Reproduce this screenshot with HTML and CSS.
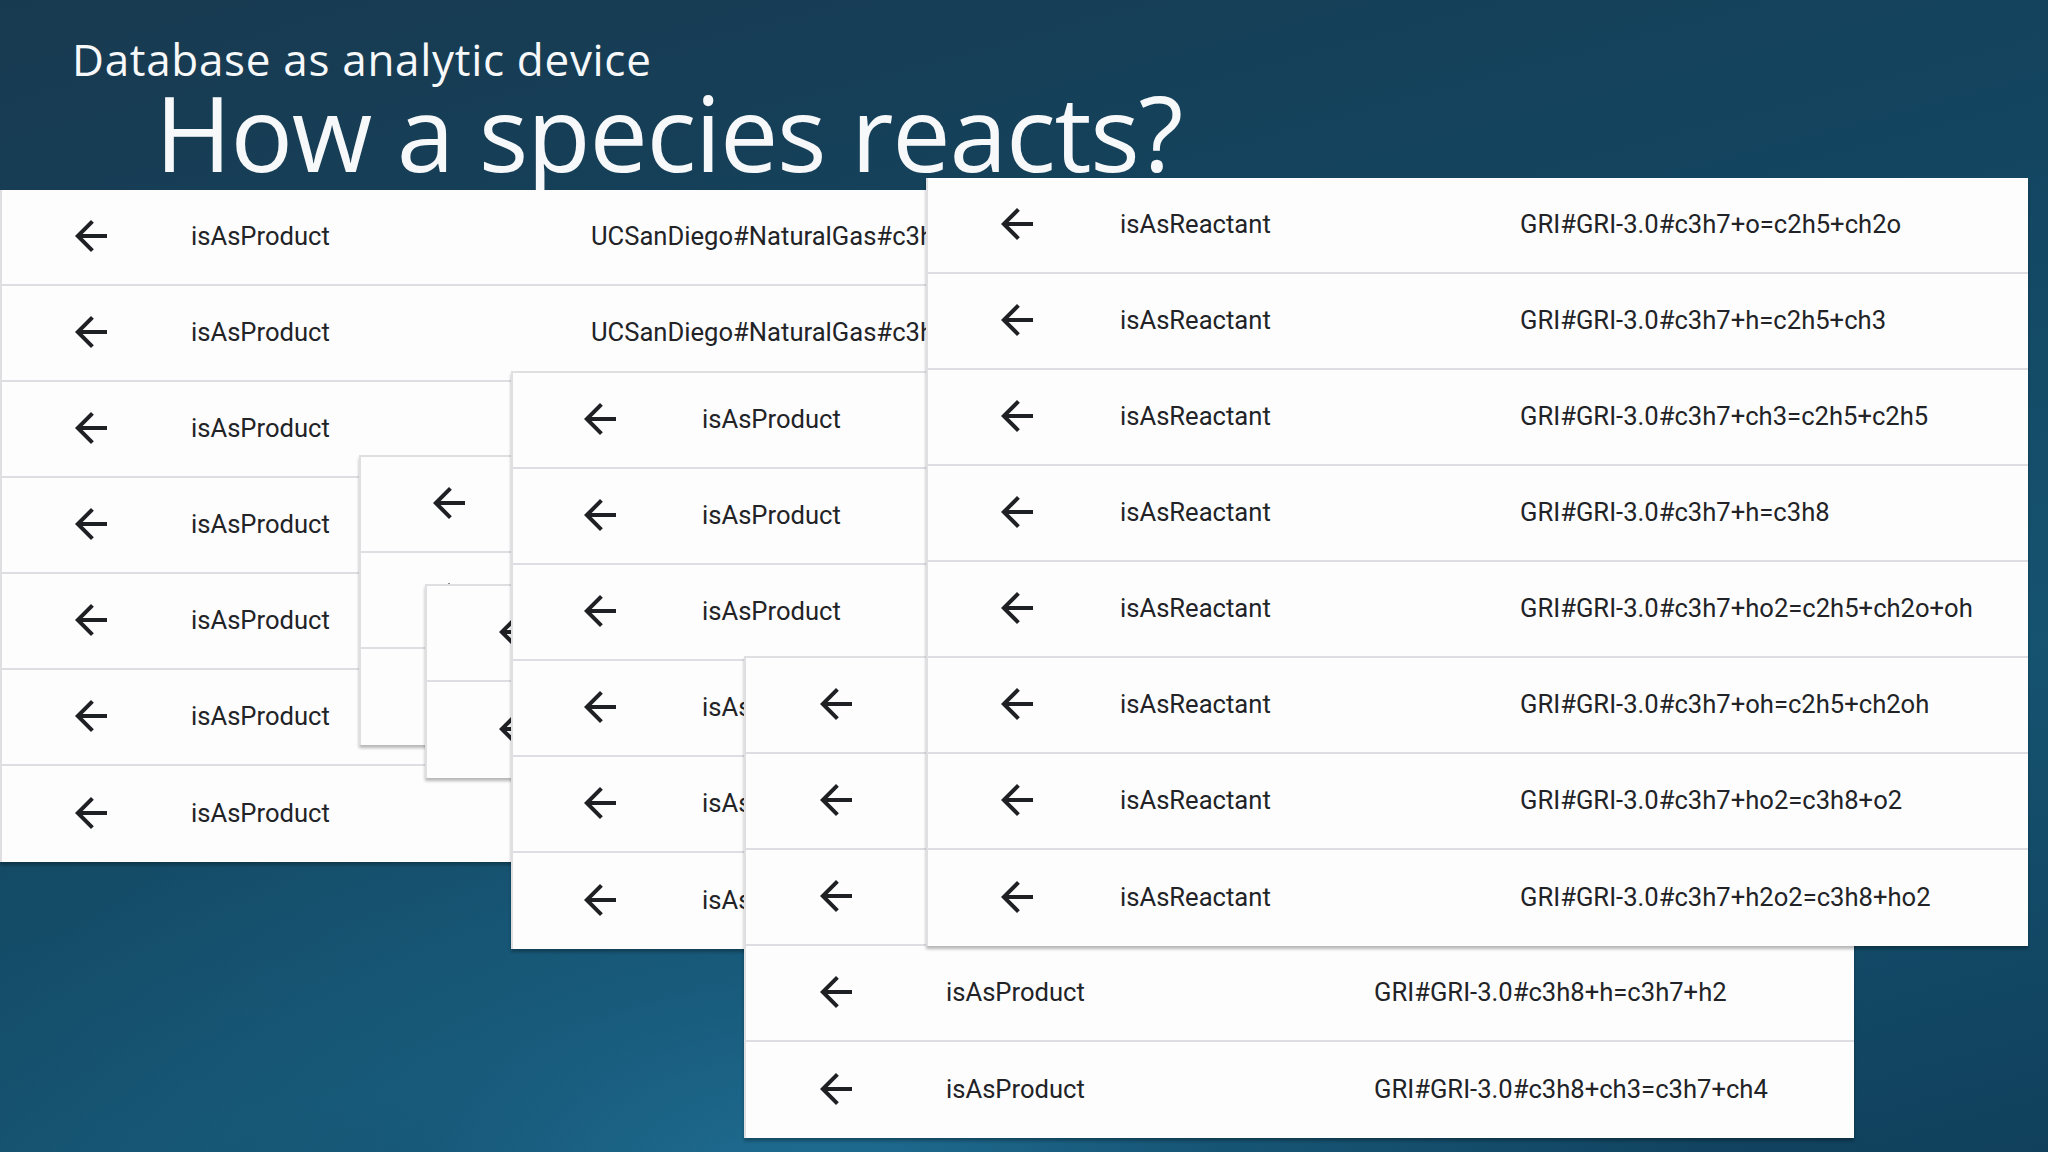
FILE: index.html
```html
<!DOCTYPE html>
<html lang="en">
<head>
<meta charset="utf-8">
<title>How a species reacts?</title>
<link rel="stylesheet" href="styles.css">
</head>
<body>
<div class="slide">
  <header class="titles">
    <div class="kicker">Database as analytic device</div>
    <h1 class="headline">How a species reacts?</h1>
  </header>

  <div class="desk">
    <section class="panel panel-a">
      <div class="row"><span class="ico"><svg viewBox="0 0 24 24"><path d="M20 11H7.83l5.59-5.59L12 4l-8 8 8 8 1.41-1.41L7.83 13H20v-2z"/></svg></span><span class="rel">isAsProduct</span><span class="obj">UCSanDiego#NaturalGas#c3h7</span></div>
      <div class="row"><span class="ico"><svg viewBox="0 0 24 24"><path d="M20 11H7.83l5.59-5.59L12 4l-8 8 8 8 1.41-1.41L7.83 13H20v-2z"/></svg></span><span class="rel">isAsProduct</span><span class="obj">UCSanDiego#NaturalGas#c3h7</span></div>
      <div class="row"><span class="ico"><svg viewBox="0 0 24 24"><path d="M20 11H7.83l5.59-5.59L12 4l-8 8 8 8 1.41-1.41L7.83 13H20v-2z"/></svg></span><span class="rel">isAsProduct</span><span class="obj"></span></div>
      <div class="row"><span class="ico"><svg viewBox="0 0 24 24"><path d="M20 11H7.83l5.59-5.59L12 4l-8 8 8 8 1.41-1.41L7.83 13H20v-2z"/></svg></span><span class="rel">isAsProduct</span><span class="obj"></span></div>
      <div class="row"><span class="ico"><svg viewBox="0 0 24 24"><path d="M20 11H7.83l5.59-5.59L12 4l-8 8 8 8 1.41-1.41L7.83 13H20v-2z"/></svg></span><span class="rel">isAsProduct</span><span class="obj"></span></div>
      <div class="row"><span class="ico"><svg viewBox="0 0 24 24"><path d="M20 11H7.83l5.59-5.59L12 4l-8 8 8 8 1.41-1.41L7.83 13H20v-2z"/></svg></span><span class="rel">isAsProduct</span><span class="obj"></span></div>
      <div class="row"><span class="ico"><svg viewBox="0 0 24 24"><path d="M20 11H7.83l5.59-5.59L12 4l-8 8 8 8 1.41-1.41L7.83 13H20v-2z"/></svg></span><span class="rel">isAsProduct</span><span class="obj"></span></div>
    </section>

    <section class="panel panel-d">
      <div class="row"><span class="ico"><svg viewBox="0 0 24 24"><path d="M20 11H7.83l5.59-5.59L12 4l-8 8 8 8 1.41-1.41L7.83 13H20v-2z"/></svg></span><span class="rel"></span><span class="obj"></span></div>
      <div class="row"><span class="ico"><svg viewBox="0 0 24 24"><path d="M20 11H7.83l5.59-5.59L12 4l-8 8 8 8 1.41-1.41L7.83 13H20v-2z"/></svg></span><span class="rel"></span><span class="obj"></span></div>
      <div class="row"><span class="ico"><svg viewBox="0 0 24 24"><path d="M20 11H7.83l5.59-5.59L12 4l-8 8 8 8 1.41-1.41L7.83 13H20v-2z"/></svg></span><span class="rel"></span><span class="obj"></span></div>
    </section>

    <section class="panel panel-f">
      <div class="row"><span class="ico"><svg viewBox="0 0 24 24"><path d="M20 11H7.83l5.59-5.59L12 4l-8 8 8 8 1.41-1.41L7.83 13H20v-2z"/></svg></span><span class="rel"></span><span class="obj"></span></div>
      <div class="row"><span class="ico"><svg viewBox="0 0 24 24"><path d="M20 11H7.83l5.59-5.59L12 4l-8 8 8 8 1.41-1.41L7.83 13H20v-2z"/></svg></span><span class="rel"></span><span class="obj"></span></div>
    </section>

    <section class="panel panel-b">
      <div class="row"><span class="ico"><svg viewBox="0 0 24 24"><path d="M20 11H7.83l5.59-5.59L12 4l-8 8 8 8 1.41-1.41L7.83 13H20v-2z"/></svg></span><span class="rel">isAsProduct</span><span class="obj"></span></div>
      <div class="row"><span class="ico"><svg viewBox="0 0 24 24"><path d="M20 11H7.83l5.59-5.59L12 4l-8 8 8 8 1.41-1.41L7.83 13H20v-2z"/></svg></span><span class="rel">isAsProduct</span><span class="obj"></span></div>
      <div class="row"><span class="ico"><svg viewBox="0 0 24 24"><path d="M20 11H7.83l5.59-5.59L12 4l-8 8 8 8 1.41-1.41L7.83 13H20v-2z"/></svg></span><span class="rel">isAsProduct</span><span class="obj"></span></div>
      <div class="row"><span class="ico"><svg viewBox="0 0 24 24"><path d="M20 11H7.83l5.59-5.59L12 4l-8 8 8 8 1.41-1.41L7.83 13H20v-2z"/></svg></span><span class="rel">isAsProduct</span><span class="obj"></span></div>
      <div class="row"><span class="ico"><svg viewBox="0 0 24 24"><path d="M20 11H7.83l5.59-5.59L12 4l-8 8 8 8 1.41-1.41L7.83 13H20v-2z"/></svg></span><span class="rel">isAsProduct</span><span class="obj"></span></div>
      <div class="row"><span class="ico"><svg viewBox="0 0 24 24"><path d="M20 11H7.83l5.59-5.59L12 4l-8 8 8 8 1.41-1.41L7.83 13H20v-2z"/></svg></span><span class="rel">isAsProduct</span><span class="obj"></span></div>
    </section>

    <section class="panel panel-e">
      <div class="row"><span class="ico"><svg viewBox="0 0 24 24"><path d="M20 11H7.83l5.59-5.59L12 4l-8 8 8 8 1.41-1.41L7.83 13H20v-2z"/></svg></span><span class="rel"></span><span class="obj"></span></div>
      <div class="row"><span class="ico"><svg viewBox="0 0 24 24"><path d="M20 11H7.83l5.59-5.59L12 4l-8 8 8 8 1.41-1.41L7.83 13H20v-2z"/></svg></span><span class="rel"></span><span class="obj"></span></div>
      <div class="row"><span class="ico"><svg viewBox="0 0 24 24"><path d="M20 11H7.83l5.59-5.59L12 4l-8 8 8 8 1.41-1.41L7.83 13H20v-2z"/></svg></span><span class="rel"></span><span class="obj"></span></div>
      <div class="row"><span class="ico"><svg viewBox="0 0 24 24"><path d="M20 11H7.83l5.59-5.59L12 4l-8 8 8 8 1.41-1.41L7.83 13H20v-2z"/></svg></span><span class="rel">isAsProduct</span><span class="obj">GRI#GRI-3.0#c3h8+h=c3h7+h2</span></div>
      <div class="row"><span class="ico"><svg viewBox="0 0 24 24"><path d="M20 11H7.83l5.59-5.59L12 4l-8 8 8 8 1.41-1.41L7.83 13H20v-2z"/></svg></span><span class="rel">isAsProduct</span><span class="obj">GRI#GRI-3.0#c3h8+ch3=c3h7+ch4</span></div>
    </section>

    <section class="panel panel-c">
      <div class="row"><span class="ico"><svg viewBox="0 0 24 24"><path d="M20 11H7.83l5.59-5.59L12 4l-8 8 8 8 1.41-1.41L7.83 13H20v-2z"/></svg></span><span class="rel">isAsReactant</span><span class="obj">GRI#GRI-3.0#c3h7+o=c2h5+ch2o</span></div>
      <div class="row"><span class="ico"><svg viewBox="0 0 24 24"><path d="M20 11H7.83l5.59-5.59L12 4l-8 8 8 8 1.41-1.41L7.83 13H20v-2z"/></svg></span><span class="rel">isAsReactant</span><span class="obj">GRI#GRI-3.0#c3h7+h=c2h5+ch3</span></div>
      <div class="row"><span class="ico"><svg viewBox="0 0 24 24"><path d="M20 11H7.83l5.59-5.59L12 4l-8 8 8 8 1.41-1.41L7.83 13H20v-2z"/></svg></span><span class="rel">isAsReactant</span><span class="obj">GRI#GRI-3.0#c3h7+ch3=c2h5+c2h5</span></div>
      <div class="row"><span class="ico"><svg viewBox="0 0 24 24"><path d="M20 11H7.83l5.59-5.59L12 4l-8 8 8 8 1.41-1.41L7.83 13H20v-2z"/></svg></span><span class="rel">isAsReactant</span><span class="obj">GRI#GRI-3.0#c3h7+h=c3h8</span></div>
      <div class="row"><span class="ico"><svg viewBox="0 0 24 24"><path d="M20 11H7.83l5.59-5.59L12 4l-8 8 8 8 1.41-1.41L7.83 13H20v-2z"/></svg></span><span class="rel">isAsReactant</span><span class="obj">GRI#GRI-3.0#c3h7+ho2=c2h5+ch2o+oh</span></div>
      <div class="row"><span class="ico"><svg viewBox="0 0 24 24"><path d="M20 11H7.83l5.59-5.59L12 4l-8 8 8 8 1.41-1.41L7.83 13H20v-2z"/></svg></span><span class="rel">isAsReactant</span><span class="obj">GRI#GRI-3.0#c3h7+oh=c2h5+ch2oh</span></div>
      <div class="row"><span class="ico"><svg viewBox="0 0 24 24"><path d="M20 11H7.83l5.59-5.59L12 4l-8 8 8 8 1.41-1.41L7.83 13H20v-2z"/></svg></span><span class="rel">isAsReactant</span><span class="obj">GRI#GRI-3.0#c3h7+ho2=c3h8+o2</span></div>
      <div class="row"><span class="ico"><svg viewBox="0 0 24 24"><path d="M20 11H7.83l5.59-5.59L12 4l-8 8 8 8 1.41-1.41L7.83 13H20v-2z"/></svg></span><span class="rel">isAsReactant</span><span class="obj">GRI#GRI-3.0#c3h7+h2o2=c3h8+ho2</span></div>
    </section>
  </div>
</div>
</body>
</html>
```

FILE: styles.css
```css
html, body {
  margin: 0;
  padding: 0;
}

body {
  width: 2048px;
  height: 1152px;
  overflow: hidden;
}

.slide {
  position: relative;
  width: 2048px;
  height: 1152px;
  overflow: hidden;
  background:
    radial-gradient(ellipse 900px 520px at 40% 105%, rgba(34, 118, 158, 0.85) 0%, rgba(28, 100, 136, 0.45) 45%, rgba(20, 80, 110, 0) 100%),
    linear-gradient(165deg, #183a50 0%, #134560 40%, #155370 70%, #10405c 100%);
  font-family: "Open Sans", "Noto Sans", sans-serif;
}

.titles {
  color: #f7f8f9;
  padding-top: 36px;
}

.kicker {
  font-size: 44px;
  line-height: 46px;
  padding-left: 72px;
  letter-spacing: 0.7px;
}

.headline {
  margin: 6px 0 0 0;
  font-size: 104px;
  line-height: 88px;
  font-weight: 400;
  padding-left: 155px;
  letter-spacing: -1.3px;
}

.desk {
  position: absolute;
  inset: 0;
}

.panel {
  position: absolute;
  background: #fdfdfe;
  border-left: 2px solid #dfdfe2;
  box-shadow: 0 3px 3px rgba(0, 0, 0, 0.28);
  overflow: hidden;
  font-family: Roboto, "Liberation Sans", sans-serif;
  font-size: 25.6px;
  color: #222326;
  --pad: 64px;
  --c1: 191px;
  --c2: 400px;
}

.row {
  display: grid;
  grid-template-columns: var(--c1) var(--c2) 1fr;
  align-items: center;
  height: 96px;
  box-sizing: border-box;
  padding-bottom: 2px;
  border-bottom: 2px solid #dedee2;
  white-space: nowrap;
}

.row:last-child {
  border-bottom: none;
}

.ico {
  display: flex;
  padding-left: var(--pad);
}

.ico svg {
  width: 48px;
  height: 48px;
  fill: #1f2023;
}

.rel, .obj {
  overflow: hidden;
}

.panel-a {
  left: 0;
  top: 190px;
  width: 1100px;
  --pad: 65px;
  --c1: 189px;
  --c2: 400px;
}

.panel-d {
  left: 359px;
  top: 455px;
  width: 600px;
  border-top: 2px solid #dfdfe2;
  --pad: 64px;
}

.panel-f {
  left: 425px;
  top: 584px;
  width: 500px;
  border-top: 2px solid #dfdfe2;
  --pad: 64px;
}

.panel-b {
  left: 511px;
  top: 371px;
  width: 800px;
  border-top: 2px solid #dfdfe2;
  --pad: 63px;
  --c1: 189px;
}

.panel-e {
  left: 744px;
  top: 656px;
  width: 1108px;
  border-top: 2px solid #dfdfe2;
  --pad: 66px;
  --c1: 200px;
  --c2: 428px;
}

.panel-c {
  left: 926px;
  top: 178px;
  width: 1100px;
  --pad: 65px;
  --c1: 192px;
  --c2: 400px;
}
```
